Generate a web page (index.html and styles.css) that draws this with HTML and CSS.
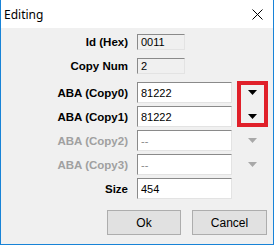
FILE: index.html
```html
<!DOCTYPE html>
<html>
  <head>
    <meta charset="UTF-8" />
    <title>Editing</title>
    <link rel="stylesheet" href="styles.css">
  </head>
  <body>
    <div class="window">
      <div class="titlebar">
        <span class="title">Editing</span>
        <svg class="close" width="11" height="11" viewBox="0 0 11 11">
          <path d="M0.5 0.5 L10.5 10.5 M10.5 0.5 L0.5 10.5" stroke="#000" stroke-width="1" fill="none" />
        </svg>
      </div>

      <div class="content">
        <div class="row">
          <span class="lbl">Id (Hex)</span>
          <div class="field readonly short">0011</div>
        </div>
        <div class="row gap-lg">
          <span class="lbl">Copy Num</span>
          <div class="field readonly short">2</div>
        </div>
        <div class="row gap-lg">
          <span class="lbl">ABA (Copy0)</span>
          <div class="field wide">81222</div>
          <svg class="arrow" width="9" height="5" viewBox="0 0 9 5"><polygon points="0,0 9,0 4.5,5" fill="#000" /></svg>
        </div>
        <div class="row gap-sm">
          <span class="lbl">ABA (Copy1)</span>
          <div class="field wide">81222</div>
          <svg class="arrow" width="9" height="5" viewBox="0 0 9 5"><polygon points="0,0 9,0 4.5,5" fill="#000" /></svg>
        </div>
        <div class="row gap-sm disabled">
          <span class="lbl">ABA (Copy2)</span>
          <div class="field wide">--</div>
          <svg class="arrow" width="9" height="5" viewBox="0 0 9 5"><polygon points="0,0 9,0 4.5,5" fill="#a8a8a8" /></svg>
        </div>
        <div class="row gap-sm disabled">
          <span class="lbl">ABA (Copy3)</span>
          <div class="field wide">--</div>
          <svg class="arrow" width="9" height="5" viewBox="0 0 9 5"><polygon points="0,0 9,0 4.5,5" fill="#a8a8a8" /></svg>
        </div>
        <div class="row gap-sm">
          <span class="lbl">Size</span>
          <div class="field wide">454</div>
        </div>

        <div class="buttons">
          <button class="btn ok">Ok</button>
          <button class="btn cancel">Cancel</button>
        </div>
      </div>

      <!-- red annotation around the dropdown arrows -->
      <div class="highlight"></div>
    </div>
  </body>
</html>
```

FILE: styles.css
```css
body {
  margin: 0;
  background: #f0f0f0;
}
.window {
  position: relative;
  box-sizing: border-box;
  width: 274px;
  height: 245px;
  border: 1px solid #1883d7;
  border-top: none;
  background: #f0f0f0;
}
.titlebar {
  display: flex;
  align-items: center;
  justify-content: space-between;
  height: 28px;
  padding: 0 10px 0 3px;
  background: #fff;
}
.title {
  font-family: "Noto Sans", sans-serif;
  font-size: 12px;
  color: #000;
}
.close {
  display: block;
  margin-top: 1px;
}
.content {
  display: flex;
  flex-direction: column;
  padding-top: 6px;
}
.row {
  display: flex;
  align-items: center;
}
.gap-lg {
  margin-top: 8px;
}
.gap-sm {
  margin-top: 3px;
}
.lbl {
  width: 127px;
  margin-right: 9px;
  text-align: right;
  font-family: "Liberation Sans", sans-serif;
  font-weight: bold;
  font-size: 11.5px;
  color: #000;
}
.disabled .lbl {
  color: #a0a0a0;
}
.field {
  box-sizing: border-box;
  display: flex;
  align-items: center;
  padding-left: 3px;
  border: 1px solid;
  border-color: #8a8a8a #e3e3e3 #e3e3e3 #8a8a8a;
  background: #fff;
  font-family: "Liberation Sans", sans-serif;
  font-size: 11px;
  color: #000;
}
.disabled .field {
  color: #8a8a8a;
}
.readonly {
  background: #f0f0f0;
}
.short {
  width: 48px;
  height: 16px;
}
.wide {
  width: 95px;
  height: 21px;
}
.arrow {
  display: block;
  margin-left: 16px;
}
.buttons {
  display: flex;
  justify-content: flex-end;
  gap: 11px;
  margin-top: 11px;
  padding-right: 6px;
}
.btn {
  box-sizing: border-box;
  height: 25px;
  border: 1px solid #adadad;
  background: #e1e1e1;
  font-family: "Liberation Sans", sans-serif;
  font-size: 12px;
  color: #000;
  padding: 0;
}
.ok {
  width: 74px;
}
.cancel {
  width: 75px;
}
.highlight {
  position: absolute;
  left: 236px;
  top: 81px;
  width: 31px;
  height: 46px;
  box-sizing: border-box;
  border: 4px solid #e0202a;
}
```
